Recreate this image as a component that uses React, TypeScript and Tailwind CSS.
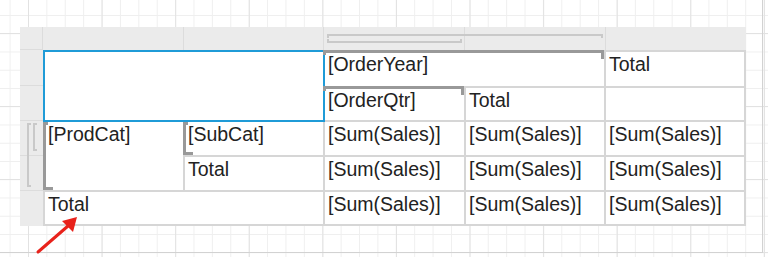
import type { ReactNode } from 'react';

// dark marks that show where a group starts in the tablix
const mark = 'absolute bg-[#999999]';

function Cell({ children, className = '' }: { children?: ReactNode; className?: string }) {
  return (
    <div className={`relative bg-white pl-[3px] pt-[1px] text-[19.5px] leading-[22px] text-[#222222] ${className}`}>
      {children}
    </div>
  );
}

function ColGroupMark() {
  return (
    <>
      <div className={`${mark} -top-[2px] -left-[2px] right-0 h-[3px]`} />
      <div className={`${mark} top-0 -left-[2px] h-[3px] w-[3px]`} />
      <div className={`${mark} top-0 right-0 h-[7px] w-[3px]`} />
    </>
  );
}

function RowGroupMark() {
  return (
    <>
      <div className={`${mark} top-0 bottom-0 -left-[2px] w-[3px]`} />
      <div className={`${mark} top-0 left-0 h-[3px] w-[3px]`} />
      <div className={`${mark} bottom-0 left-0 h-[3px] w-[8px]`} />
    </>
  );
}

const sum = '[Sum(Sales)]';

export default function App() {
  return (
    <div className="relative h-[257px] w-[768px] overflow-hidden bg-white bg-[linear-gradient(to_right,#efefef_1px,transparent_1px),linear-gradient(to_bottom,#efefef_1px,transparent_1px)] bg-[length:18.4px_18.25px] bg-[position:9.6px_15px] pt-[27px] pl-[20px] font-['Liberation_Sans',Arial,sans-serif]">
      {/* major grid lines + page edge */}
      <div className="pointer-events-none absolute inset-0 bg-[linear-gradient(to_right,#e2e2e2_1px,transparent_1px),linear-gradient(to_bottom,#e2e2e2_1px,transparent_1px)] bg-[length:73.6px_73px] bg-[position:28px_33px]" />
      <div className="pointer-events-none absolute top-0 left-0 h-[253px] w-[763px] border-r border-b border-[#d2d2d2]" />

      <div className="relative flex w-[726px] flex-col">
        {/* column handles */}
        <div className="relative flex h-[23px] bg-[#ebebeb]">
          <div className="w-[23px] border-r border-b border-[#dcdcdc]" />
          <div className="w-[141px] border-r border-[#dcdcdc]" />
          <div className="w-[140px] border-r border-[#dcdcdc]" />
          <div className="w-[141px] border-r border-[#dcdcdc]" />
          <div className="w-[141px] border-r border-[#dcdcdc]" />
          <div className="w-[140px]" />
          <div className="absolute top-[7px] left-[307px] h-[4px] w-[276px] border-x-2 border-t-2 border-[#c9c9c9]" />
          <div className="absolute top-[12px] left-[307px] h-[4px] w-[135px] border-x-2 border-b-2 border-[#c9c9c9]" />
        </div>

        <div className="flex">
          {/* row handles */}
          <div className="relative flex w-[23px] flex-col bg-[#ebebeb]">
            <div className="h-[36px] border-b border-[#dcdcdc]" />
            <div className="h-[35px] border-b border-[#dcdcdc]" />
            <div className="h-[35px] border-b border-[#dcdcdc]" />
            <div className="h-[35px] border-b border-[#dcdcdc]" />
            <div className="h-[35px]" />
            <div className="absolute top-[73px] left-[7px] h-[64px] w-[4px] border-y-2 border-l-2 border-[#c9c9c9]" />
            <div className="absolute top-[73px] left-[13px] h-[28px] w-[4px] border-y-2 border-l-2 border-[#c9c9c9]" />
          </div>

          {/* tablix body */}
          <div className="grid grid-cols-[138px_138px_139px_138px_138px] grid-rows-[34px_32px_33px_33px_32px] gap-[2px] bg-[#d6d6d6] p-[2px]">
            <div className="col-span-2 row-span-2 bg-white outline-2 outline-[#1f9bd7]" />
            <Cell className="col-span-2">
              [OrderYear]
              <ColGroupMark />
            </Cell>
            <Cell>Total</Cell>
            <Cell>
              [OrderQtr]
              <ColGroupMark />
            </Cell>
            <Cell>Total</Cell>
            <Cell />
            <Cell className="row-span-2">
              [ProdCat]
              <RowGroupMark />
            </Cell>
            <Cell>
              [SubCat]
              <RowGroupMark />
            </Cell>
            <Cell>{sum}</Cell>
            <Cell>{sum}</Cell>
            <Cell>{sum}</Cell>
            <Cell>Total</Cell>
            <Cell>{sum}</Cell>
            <Cell>{sum}</Cell>
            <Cell>{sum}</Cell>
            <Cell className="col-span-2">Total</Cell>
            <Cell>{sum}</Cell>
            <Cell>{sum}</Cell>
            <Cell>{sum}</Cell>
          </div>
        </div>
      </div>

      {/* red callout arrow */}
      <svg className="pointer-events-none absolute top-[210px] left-[30px]" width="56" height="47" viewBox="0 0 56 47">
        <line x1="8" y1="42" x2="38" y2="16" stroke="#e8221b" strokeWidth="3" strokeLinecap="round" />
        <polygon points="47,7 32,11 43,22" fill="#e8221b" />
      </svg>
    </div>
  );
}
